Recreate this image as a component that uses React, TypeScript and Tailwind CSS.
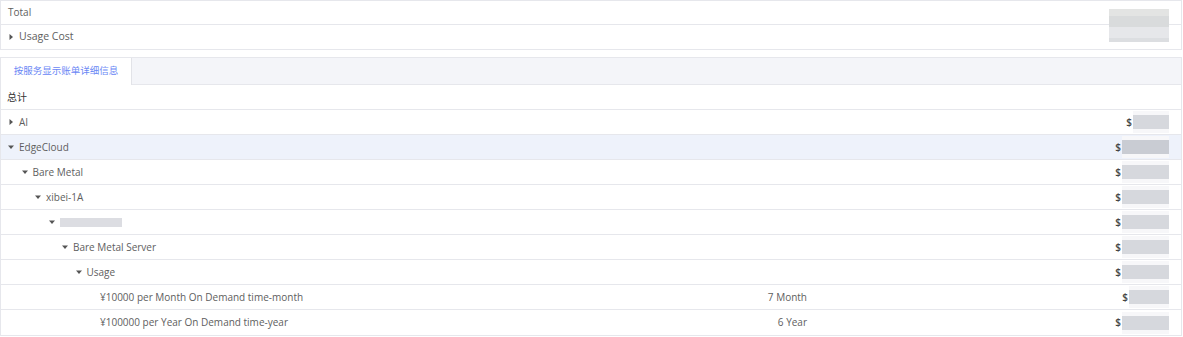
import React from "react";

const Tri = ({ open }: { open: boolean }) => (
  <svg width="6" height="6" viewBox="0 0 6 6" className="shrink-0">
    {open ? <path d="M0 1.5 L6 1.5 L3 5 Z" fill="#555" /> : <path d="M1.5 0 L5 3 L1.5 6 Z" fill="#555" />}
  </svg>
);

const Blur = ({ w, dark }: { w: number; dark?: boolean }) => (
  <div className="flex flex-col h-[22px] justify-center bg-[#f7f7f9]" style={{ width: w }}>
    <div className={`h-[14px] w-full ${dark ? "bg-[#c9ccd3]" : "bg-[#d6d8dd]"}`} />
  </div>
);

type Row = {
  level: number;
  name?: string;
  blurName?: boolean;
  tri?: "open" | "closed" | null;
  qty?: string;
  amt?: number;
  hl?: boolean;
};

const rows: Row[] = [
  { level: 0, name: "AI", tri: "closed", amt: 36 },
  { level: 0, name: "EdgeCloud", tri: "open", amt: 47, hl: true },
  { level: 1, name: "Bare Metal", tri: "open", amt: 47 },
  { level: 2, name: "xibei-1A", tri: "open", amt: 47 },
  { level: 3, blurName: true, tri: "open", amt: 47 },
  { level: 4, name: "Bare Metal Server", tri: "open", amt: 47 },
  { level: 5, name: "Usage", tri: "open", amt: 47 },
  { level: 6, name: "¥10000 per Month On Demand time-month", tri: null, qty: "7 Month", amt: 40 },
  { level: 6, name: "¥100000 per Year On Demand time-year", tri: null, qty: "6 Year", amt: 47 },
];

export default function App() {
  return (
    <div
      className="w-[1183px] h-[337px] bg-white text-[10px] text-[#5e5e5e] overflow-hidden"
      style={{ fontFamily: '"Open Sans", "Noto Sans CJK SC", sans-serif' }}
    >
      <div className="border border-[#e6e7ec] mr-px">
        <div className="h-[24px] flex items-center pl-[7px] border-b border-[#e6e7ec] relative">
          <span>Total</span>
          <div className="absolute right-[12px] top-[8px] w-[60px] h-[33px] flex flex-col">
            <div className="h-[7px] bg-[#e3e4e3]" />
            <div className="h-[11px] bg-[#d9dbdc]" />
            <div className="h-[11px] bg-[#e6e7ea]" />
            <div className="h-[4px] bg-[#dcdee1]" />
          </div>
        </div>
        <div className="h-[24px] flex items-center pl-[7px] gap-[5px]">
          <Tri open={false} />
          <span className="text-[10.5px]">Usage Cost</span>
        </div>
      </div>

      <div className="mt-[7px] border border-[#e6e7ec] mr-px">
        <div className="h-[27px] flex bg-[#f4f5f9] border-b border-[#e6e7ec]">
          <div className="w-[131px] bg-white border-r border-[#e2e3e8] flex items-center justify-center text-[#6a87f5] text-[9.5px] h-[27px]">
            按服务显示账单详细信息
          </div>
        </div>
        <div className="h-[25px] flex items-center pl-[6px] border-b border-[#e6e7ec] text-[#333]">总计</div>
        {rows.map((r, i) => (
          <div
            key={i}
            className={`h-[25px] flex items-center border-b border-[#e6e7ec] last:border-b-0 ${r.hl ? "bg-[#eef2fb]" : ""}`}
          >
            <div className="flex items-center gap-[5px] w-[700px]" style={{ paddingLeft: 7 + r.level * 13.5 }}>
              {r.tri ? <Tri open={r.tri === "open"} /> : <span className="w-[6px] shrink-0" />}
              {r.blurName ? (
                <div className="w-[62px] h-[9px] bg-[#dcdde2]" />
              ) : (
                <span>{r.name}</span>
              )}
            </div>
            <div className="w-[106px] text-right">{r.qty}</div>
            <div className="flex-1 flex justify-end items-center pr-[12px]">
              <span className="font-semibold text-[#444] mr-px">$</span>
              <Blur w={r.amt ?? 40} dark={r.hl} />
            </div>
          </div>
        ))}
      </div>
    </div>
  );
}
